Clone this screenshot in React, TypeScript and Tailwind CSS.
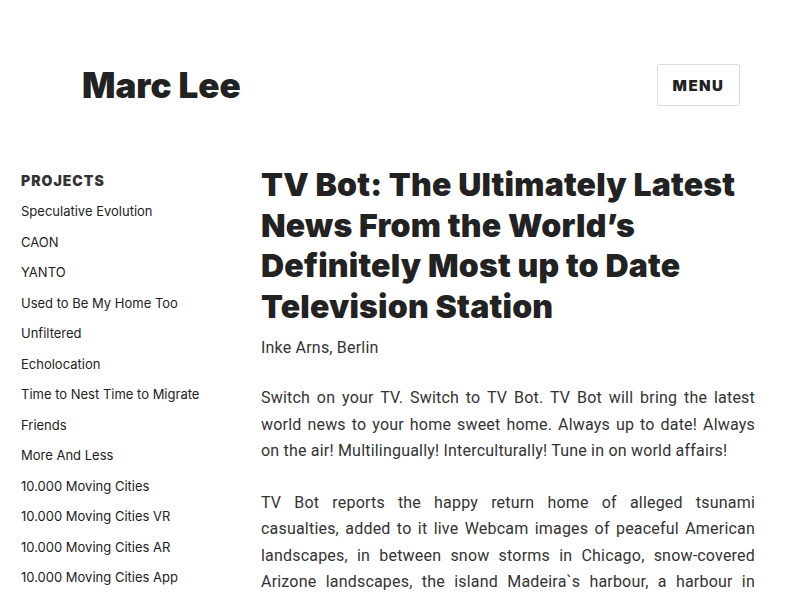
const projects = [
  'Speculative Evolution',
  'CAON',
  'YANTO',
  'Used to Be My Home Too',
  'Unfiltered',
  'Echolocation',
  'Time to Nest Time to Migrate',
  'Friends',
  'More And Less',
  '10.000 Moving Cities',
  '10.000 Moving Cities VR',
  '10.000 Moving Cities AR',
  '10.000 Moving Cities App',
];

export default function App() {
  return (
    <div className="h-[600px] overflow-hidden bg-white font-['Inter','Liberation_Sans',sans-serif] text-[#333]">
      <header className="flex items-center justify-between pl-[82px] pr-[60px] pt-[64px]">
        <h1 className="text-[35px] font-black leading-[42px] text-[#222]">Marc Lee</h1>
        <button className="h-[42px] w-[83px] rounded-[2px] border border-[#ddd] pt-[3px] text-[15px] font-black tracking-[1.5px] text-[#222]">
          MENU
        </button>
      </header>

      <div className="mt-[60px] flex">
        <aside className="w-[261px] shrink-0 pl-[21px] pt-[4px]">
          <h2 className="text-[14px] font-black leading-[22px] tracking-[1px] text-[#333]">PROJECTS</h2>
          <ul className="mt-[8px]">
            {projects.map((p) => (
              <li key={p} className="h-[30.5px] text-[13px] leading-[22px] text-[#222]">
                {p}
              </li>
            ))}
          </ul>
        </aside>

        <main className="-mt-[1px] w-[494px]">
          <h1 className="text-[32px] font-black leading-[40.5px] tracking-[0.2px] text-[#222]">
            TV Bot: The Ultimately Latest News From the World’s Definitely Most up to Date Television Station
          </h1>
          <div className="font-['Roboto','Liberation_Sans',sans-serif] text-[16px] leading-[26.5px] tracking-[0.2px]">
            <p className="mt-[8px]">Inke Arns, Berlin</p>
            <p className="mt-[23.5px] text-justify">
              Switch on your TV. Switch to TV Bot. TV Bot will bring the latest world news to your home sweet home. Always up to date! Always on the air! Multilingually! Interculturally! Tune in on world affairs!
            </p>
            <p className="mt-[25px] text-justify">
              TV Bot reports the happy return home of alleged tsunami casualties, added to it live Webcam images of peaceful American landscapes, in between snow storms in Chicago, snow-covered Arizone landscapes, the island Madeira`s harbour, a harbour in Hamburg, a beach in Thailand.
            </p>
          </div>
        </main>
      </div>
    </div>
  );
}
